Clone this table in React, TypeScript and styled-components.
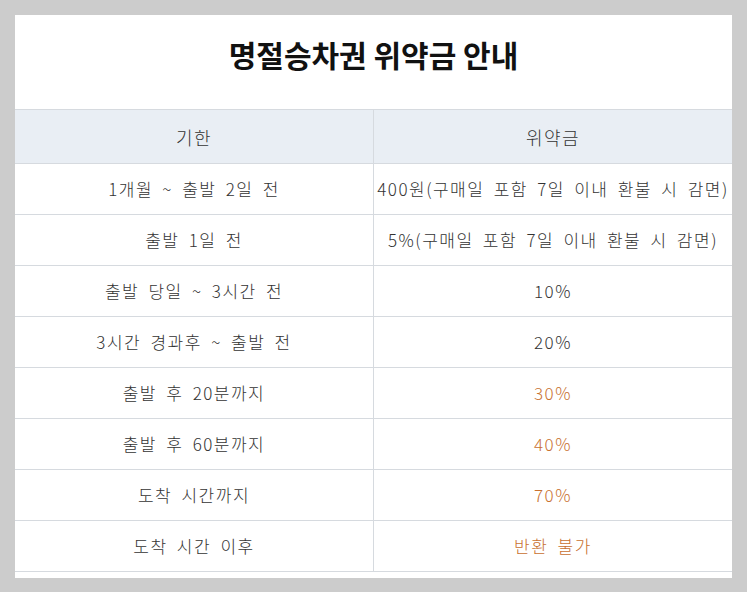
import styled, { createGlobalStyle } from 'styled-components'

const GlobalStyle = createGlobalStyle`
  html, body {
    margin: 0;
    padding: 0;
    background: #cccccc;
  }
  body {
    font-family: "Noto Sans CJK KR", "Noto Sans", sans-serif;
  }
`

type Row = { period: string; fee: string; warn?: boolean }

const rows: Row[] = [
  { period: '1개월 ~ 출발 2일 전', fee: '400원(구매일 포함 7일 이내 환불 시 감면)' },
  { period: '출발 1일 전', fee: '5%(구매일 포함 7일 이내 환불 시 감면)' },
  { period: '출발 당일 ~ 3시간 전', fee: '10%' },
  { period: '3시간 경과후 ~ 출발 전', fee: '20%' },
  { period: '출발 후 20분까지', fee: '30%', warn: true },
  { period: '출발 후 60분까지', fee: '40%', warn: true },
  { period: '도착 시간까지', fee: '70%', warn: true },
  { period: '도착 시간 이후', fee: '반환 불가', warn: true },
]

const Page = styled.div`
  padding: 15px;
  min-height: 592px;
  box-sizing: border-box;
`

const Panel = styled.div`
  background: #ffffff;
  padding-bottom: 6px;
`

const Title = styled.h1`
  margin: 0;
  height: 94px;
  padding-top: 21px;
  box-sizing: border-box;
  text-align: center;
  font-size: 30px;
  line-height: 36px;
  font-weight: 700;
  color: #111111;
`

const Table = styled.table`
  width: 100%;
  border-collapse: collapse;
  table-layout: fixed;
  border-top: 1px solid #d6dadf;
`

const HeadCell = styled.th`
  height: 53px;
  padding: 0;
  background: #e9eef4;
  border-bottom: 1px solid #d6dadf;
  font-size: 18px;
  font-weight: 300;
  letter-spacing: 1.5px;
  color: #333333;
  text-align: center;
  & + & {
    border-left: 1px solid #d6dadf;
  }
`

const Cell = styled.td<{ $warn?: boolean }>`
  height: 49px;
  padding: 0 0 1px;
  border-bottom: 1px solid #d6dadf;
  font-size: 17px;
  font-weight: 300;
  letter-spacing: 1.5px;
  word-spacing: 4px;
  color: ${p => (p.$warn ? '#c8702f' : '#333333')};
  text-align: center;
  white-space: nowrap;
  & + & {
    border-left: 1px solid #d6dadf;
  }
`

const App = () => {
  return (
    <Page>
      <GlobalStyle />
      <Panel>
        <Title>명절승차권 위약금 안내</Title>
        <Table>
          <thead>
            <tr>
              <HeadCell>기한</HeadCell>
              <HeadCell>위약금</HeadCell>
            </tr>
          </thead>
          <tbody>
            {rows.map(r => (
              <tr key={r.period}>
                <Cell>{r.period}</Cell>
                <Cell $warn={r.warn}>{r.fee}</Cell>
              </tr>
            ))}
          </tbody>
        </Table>
      </Panel>
    </Page>
  )
}

export default App
